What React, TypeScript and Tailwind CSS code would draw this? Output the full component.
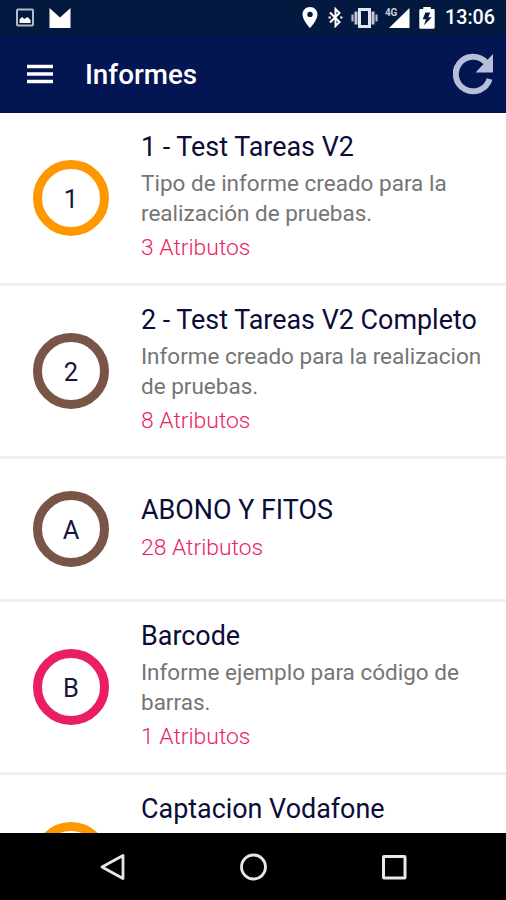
type Report = {
  initial?: string
  title: string
  description?: string
  attributes?: number
  ring: string
  compact?: boolean
}

const reports: Report[] = [
  {
    initial: "1",
    title: "1 - Test Tareas V2",
    description: "Tipo de informe creado para la realización de pruebas.",
    attributes: 3,
    ring: "border-[#ff9800]",
  },
  {
    initial: "2",
    title: "2 - Test Tareas V2 Completo",
    description: "Informe creado para la realizacion de pruebas.",
    attributes: 8,
    ring: "border-[#795548]",
  },
  {
    initial: "A",
    title: "ABONO Y FITOS",
    attributes: 28,
    ring: "border-[#795548]",
    compact: true,
  },
  {
    initial: "B",
    title: "Barcode",
    description: "Informe ejemplo para código de barras.",
    attributes: 1,
    ring: "border-[#e91e63]",
  },
  {
    title: "Captacion Vodafone",
    ring: "border-[#ff9800]",
  },
]

function StatusBar() {
  return (
    <div className="flex h-[35px] shrink-0 items-center bg-[#04193f] pl-4 pr-[11px] text-white">
      <svg className="h-[19px] w-[18px]" viewBox="0 0 18 19" fill="none">
        <rect x="1" y="1.5" width="16" height="16" rx="1" stroke="#b4bac8" strokeWidth="2" />
        <path d="M3.5 15V11.5l2.5-2.5 2.5 2 3-2 3 3v3z" fill="white" />
      </svg>
      <svg className="ml-[15px] h-5 w-[22px]" viewBox="0 0 22 20" fill="currentColor">
        <path d="M0.5 0L11 9.5 21.5 0V20H0.5z" />
      </svg>

      <div className="ml-auto flex items-center">
        <svg className="h-[21px] w-4" viewBox="0 0 16 21" fill="currentColor">
          <path
            fillRule="evenodd"
            d="M8 0C3.6 0 .5 3.3.5 7.4.5 13 8 21 8 21s7.5-8 7.5-13.6C15.5 3.3 12.4 0 8 0zm0 4.7a2.7 2.7 0 1 1 0 5.4 2.700 2.700 0 0 1 0-5.400z"
          />
        </svg>
        <svg className="ml-2.5 h-[21px] w-[15px]" viewBox="0 0 15 21" fill="none" stroke="currentColor" strokeWidth="2">
          <path d="M2 5.5L11.5 15 7.5 19V2l4 4L2 15.5" />
          <path d="M12.2 10.5h2.2M0.6 10.5h2.2" strokeWidth="2.2" />
        </svg>
        <svg className="ml-2 h-5 w-[27px]" viewBox="0 0 27 20" fill="none">
          <rect x="8.5" y="1.5" width="10" height="17" stroke="#e3e6ed" strokeWidth="3" />
          <path d="M5 3.5v13M22 3.5v13" stroke="#c3c8d4" strokeWidth="3" />
          <path d="M1.5 6.5v7M25.5 6.5v7" stroke="#b4bac8" strokeWidth="2.2" />
        </svg>
        <div className="relative ml-[11px] h-5 w-[21px]">
          <svg className="h-5 w-[21px]" viewBox="0 0 21 20" fill="currentColor">
            <path d="M0 20L20.5 0V20z" />
          </svg>
          <span className="absolute -left-1 top-0 text-[10px] font-bold leading-[10px] tracking-tight text-[#c9ced9]">
            4G
          </span>
        </div>
        <svg className="ml-[9px] h-[22px] w-4" viewBox="0 0 15 22" preserveAspectRatio="none" fill="currentColor">
          <path
            fillRule="evenodd"
            d="M4 0h7v2H13.5q1.2 0 1.2 1.2V20.5q0 1.2-1.2 1.2H1.5Q.3 21.7.3 20.5V3.2Q.3 2 1.5 2H4zM10.5 5.5H6L3.5 12.2h3L4.7 18.3 12 10.3H8.7z"
          />
        </svg>
        <span className="ml-2.5 text-[19.7px] font-medium leading-[34px]">13:06</span>
      </div>
    </div>
  )
}

function AppBar() {
  return (
    <header className="flex h-[78px] shrink-0 items-center border-b border-[#02103f] bg-[#031553] pl-[27px] pr-[13px] text-white">
      <button type="button" aria-label="Menú">
        <svg className="h-5 w-[26px]" viewBox="0 0 26 20" fill="none" stroke="currentColor" strokeWidth="3.4">
          <path d="M0 2.5h26M0 10h26M0 17.5h26" />
        </svg>
      </button>
      <h1 className="ml-8 pt-0.5 text-[27.8px] font-medium leading-9">Informes</h1>
      <button type="button" aria-label="Actualizar" className="ml-auto">
        <svg className="h-[42px] w-10" viewBox="0 0 40 42" fill="none">
          <path d="M33 9.5A17.3 17.3 0 1 0 36.6 26" stroke="#b6bfd7" strokeWidth="6" />
          <path d="M40 1V19.5H22.5z" fill="#b6bfd7" />
        </svg>
      </button>
    </header>
  )
}

function ReportRow({ report }: { report: Report }) {
  return (
    <li
      className={`flex shrink-0 items-center border-b-[3px] border-[#efefef] pl-[33px] ${
        report.compact ? "h-[143px]" : "h-[173px]"
      }`}
    >
      <span
        className={`flex h-[76px] w-[76px] shrink-0 items-center justify-center rounded-full border-[9.5px] pt-0.5 text-[25.5px] text-[#15173f] ${report.ring}`}
      >
        {report.initial}
      </span>
      <div className={`ml-8 w-[350px] ${report.compact ? "h-[75px]" : "h-[138px]"}`}>
        <h2 className="whitespace-nowrap text-[26.9px] leading-9 text-[#0b0d38]">{report.title}</h2>
        {report.description && (
          <p className="mt-1 text-[22.5px] leading-[29.5px] text-[#757575]">{report.description}</p>
        )}
        {report.attributes && (
          <p className="mt-[5px] text-[22.9px] font-light leading-[30px] text-[#e91e63]">
            {report.attributes} Atributos
          </p>
        )}
      </div>
    </li>
  )
}

function NavigationBar() {
  return (
    <nav className="flex h-[67px] shrink-0 items-center justify-center gap-[113px] bg-black text-[#e8e8e8]">
      <svg className="h-7 w-7" viewBox="0 0 28 28" fill="none" stroke="currentColor" strokeWidth="2.8" strokeLinejoin="round">
        <path d="M25 2.5V25.5L4 14z" />
      </svg>
      <svg className="h-7 w-7" viewBox="0 0 28 28" fill="none" stroke="currentColor" strokeWidth="2.8">
        <circle cx="14.5" cy="14" r="12" />
      </svg>
      <svg className="h-7 w-7" viewBox="0 0 28 28" fill="none" stroke="currentColor" strokeWidth="3">
        <rect x="3.5" y="3.5" width="21.5" height="21.5" rx="0.5" />
      </svg>
    </nav>
  )
}

export default function App() {
  return (
    <div className="flex h-[900px] w-[506px] flex-col overflow-hidden bg-white font-[Roboto,sans-serif]">
      <StatusBar />
      <AppBar />
      <ul className="flex min-h-0 flex-1 flex-col overflow-hidden">
        {reports.map((report) => (
          <ReportRow key={report.title} report={report} />
        ))}
      </ul>
      <NavigationBar />
    </div>
  )
}
